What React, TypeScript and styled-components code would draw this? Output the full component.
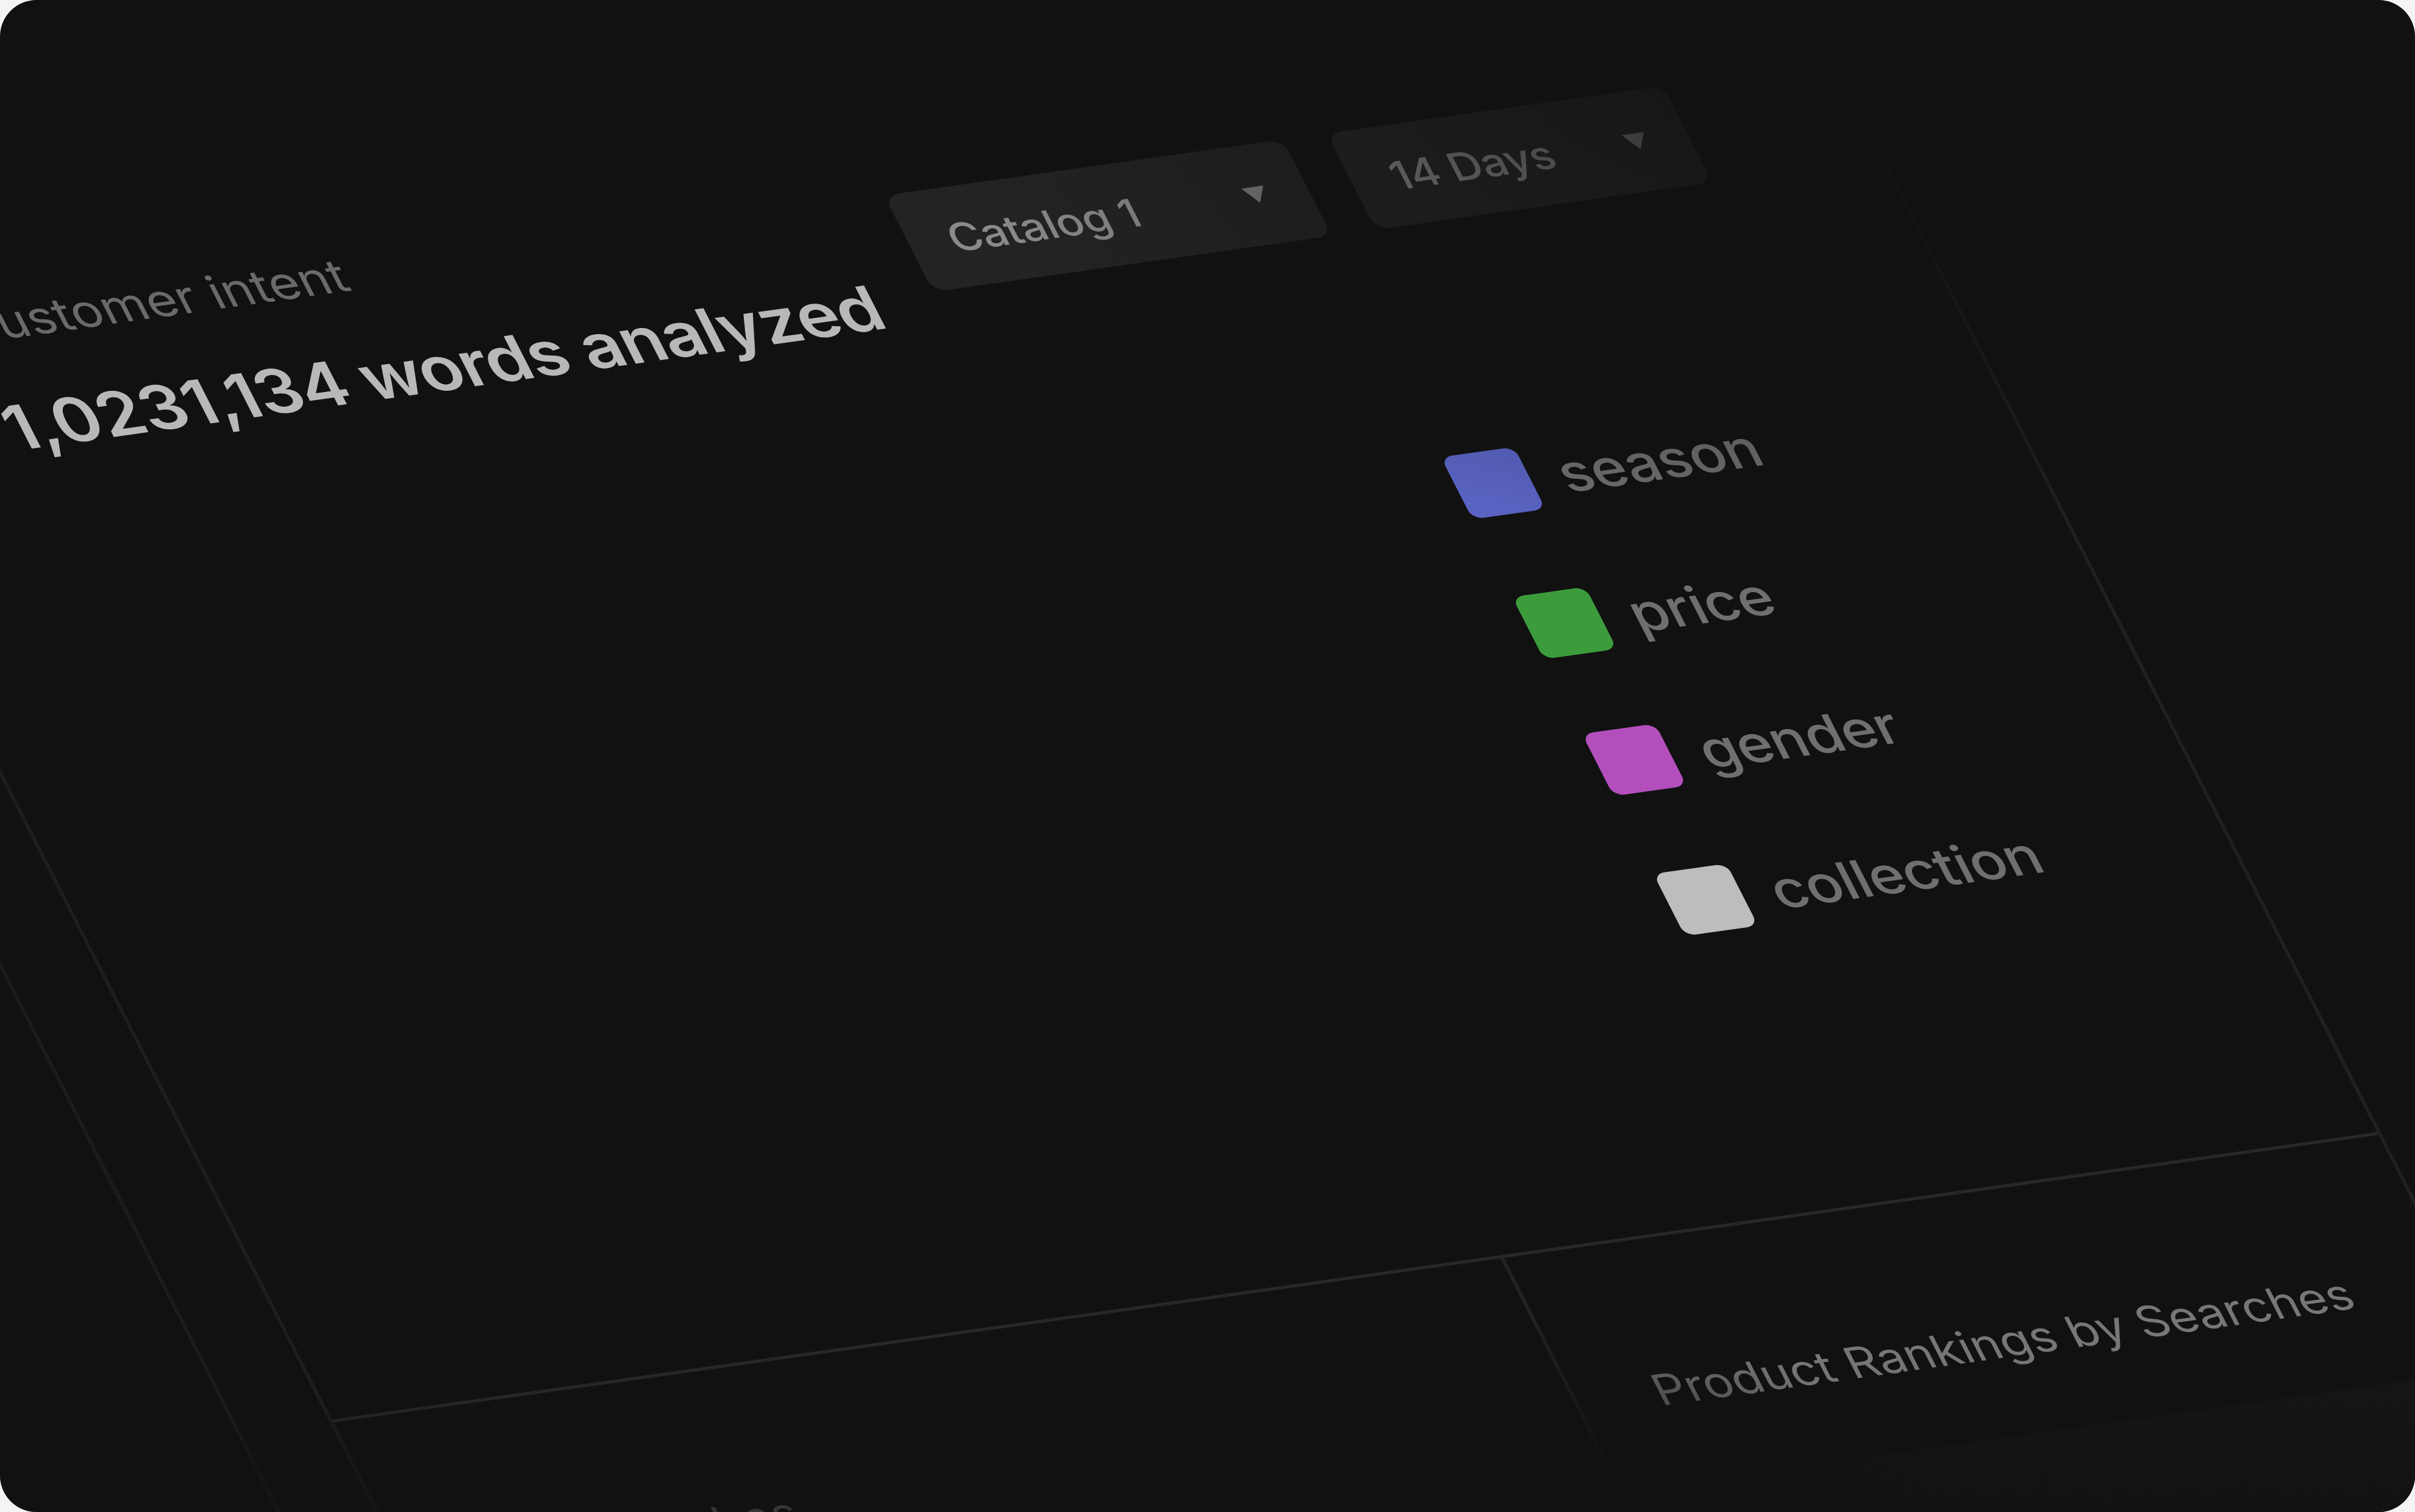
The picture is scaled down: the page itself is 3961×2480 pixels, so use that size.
import React from 'react';
import styled, { createGlobalStyle } from 'styled-components';

const GlobalStyle = createGlobalStyle`
  html, body {
    margin: 0;
    padding: 0;
    background: #f4f4f4;
  }
  * {
    box-sizing: border-box;
  }
`;

const Stage = styled.div`
  position: relative;
  width: 3961px;
  height: 2480px;
  overflow: hidden;
  border-radius: 60px;
  background: #111111;
  font-family: Inter, "Noto Sans", sans-serif;
`;

const Plane = styled.div`
  display: grid;
  grid-template-columns: 25px 561px;
  width: 586px;
  height: 700px;
  transform-origin: 0 0;
  transform: matrix(6, -0.843, 2.6, 5.1, -649, 315);
`;

const Gutter = styled.div`
  border-left: 1px solid #1c1c1c;
`;

const Panel = styled.div`
  display: flex;
  flex-direction: column;
  border-left: 1px solid #1e1e1e;
  border-right: 1px solid #202020;
`;

const TopSection = styled.section`
  height: 400px;
  padding-top: 46px;
  border-bottom: 1px solid #272727;
`;

const Header = styled.header`
  display: flex;
  justify-content: space-between;
  align-items: flex-start;
  padding: 0 46px 0 49px;
`;

const Subtitle = styled.div`
  font-size: 14px;
  line-height: 20px;
  color: #6a6a6a;
`;

const Title = styled.h1`
  margin: 11px 0 0 -3.5px;
  font-size: 19px;
  line-height: 24px;
  letter-spacing: -0.24px;
  font-weight: 600;
  color: #b8b8b8;
`;

const Filters = styled.div`
  display: flex;
  gap: 12px;
  margin-top: 9px;
`;

const Dropdown = styled.div<{ $width: number }>`
  display: flex;
  align-items: center;
  justify-content: space-between;
  width: ${(p) => p.$width}px;
  height: 31px;
  padding: 0 11px 0 11.5px;
  border-radius: 4px;
  background: #232323;
  font-size: 12px;
  font-weight: 500;
  letter-spacing: -0.1px;
  color: #8a8a8a;
`;

const Caret = styled.span`
  width: 0;
  height: 0;
  border-left: 3.5px solid transparent;
  border-right: 3.5px solid transparent;
  border-top: 5.5px solid #7f7f7f;
`;

const Legend = styled.ul`
  display: flex;
  flex-direction: column;
  gap: 24.5px;
  margin: 56px 0 0 408px;
  padding: 0;
  list-style: none;
`;

const LegendRow = styled.li`
  display: flex;
  align-items: center;
  gap: 8px;
  height: 20px;
  font-size: 16px;
  font-weight: 500;
  letter-spacing: -0.15px;
  color: #6f6f6f;
`;

const Swatch = styled.span<{ $color: string }>`
  width: 20px;
  height: 20px;
  border-radius: 3px;
  background: ${(p) => p.$color};
`;

const BottomSection = styled.section`
  display: grid;
  grid-template-columns: 319px 1fr;
  flex: 1;
`;

const Cell = styled.div`
  padding: 36px 0 0 21px;
  & + & {
    border-left: 1px solid #222222;
  }
`;

const CellTitle = styled.div`
  font-size: 13.2px;
  line-height: 20px;
  color: #777777;
`;

const RankingRow = styled.div`
  height: 40px;
  margin: 19px 0 0 -21px;
  background: #151515;
`;

const TopFade = styled.div`
  position: absolute;
  inset: 0;
  pointer-events: none;
  background:
    radial-gradient(ellipse 500px 800px at 3200px 100px, rgba(17, 17, 17, 0.95), rgba(17, 17, 17, 0)),
    radial-gradient(ellipse 1500px 900px at 3000px 0, rgba(17, 17, 17, 0.9), rgba(17, 17, 17, 0));
`;

const BottomFade = styled.div`
  position: absolute;
  inset: 0;
  pointer-events: none;
  background:
    radial-gradient(
      ellipse 700px 400px at 2500px 2560px,
      rgba(17, 17, 17, 0.98),
      rgba(17, 17, 17, 0.95) 35%,
      rgba(17, 17, 17, 0)
    ),
    linear-gradient(
      to bottom,
      rgba(17, 17, 17, 0) 2200px,
      rgba(17, 17, 17, 0.05) 2300px,
      rgba(17, 17, 17, 0.55) 2400px,
      rgba(17, 17, 17, 0.65) 2480px
    );
`;

const legend = [
  { label: 'season', color: '#5963c2' },
  { label: 'price', color: '#3c9c3c' },
  { label: 'gender', color: '#b34fbd' },
  { label: 'collection', color: '#bdbdbd' },
];

const App: React.FC = () => {
  return (
    <>
      <GlobalStyle />
      <Stage>
        <Plane>
          <Gutter />
          <Panel>
            <TopSection>
              <Header>
                <div>
                  <Subtitle>customer intent</Subtitle>
                  <Title>1,0231,134 words analyzed</Title>
                </div>
                <Filters>
                  <Dropdown $width={109}>
                    Catalog 1
                    <Caret />
                  </Dropdown>
                  <Dropdown $width={92.5}>
                    14 Days
                    <Caret />
                  </Dropdown>
                </Filters>
              </Header>
              <Legend>
                {legend.map((item) => (
                  <LegendRow key={item.label}>
                    <Swatch $color={item.color} />
                    {item.label}
                  </LegendRow>
                ))}
              </Legend>
            </TopSection>
            <BottomSection>
              <Cell>
                <CellTitle>Top Searches</CellTitle>
              </Cell>
              <Cell>
                <CellTitle>Product Rankings by Searches</CellTitle>
                <RankingRow />
              </Cell>
            </BottomSection>
          </Panel>
        </Plane>
        <TopFade />
        <BottomFade />
      </Stage>
    </>
  );
};

export default App;
